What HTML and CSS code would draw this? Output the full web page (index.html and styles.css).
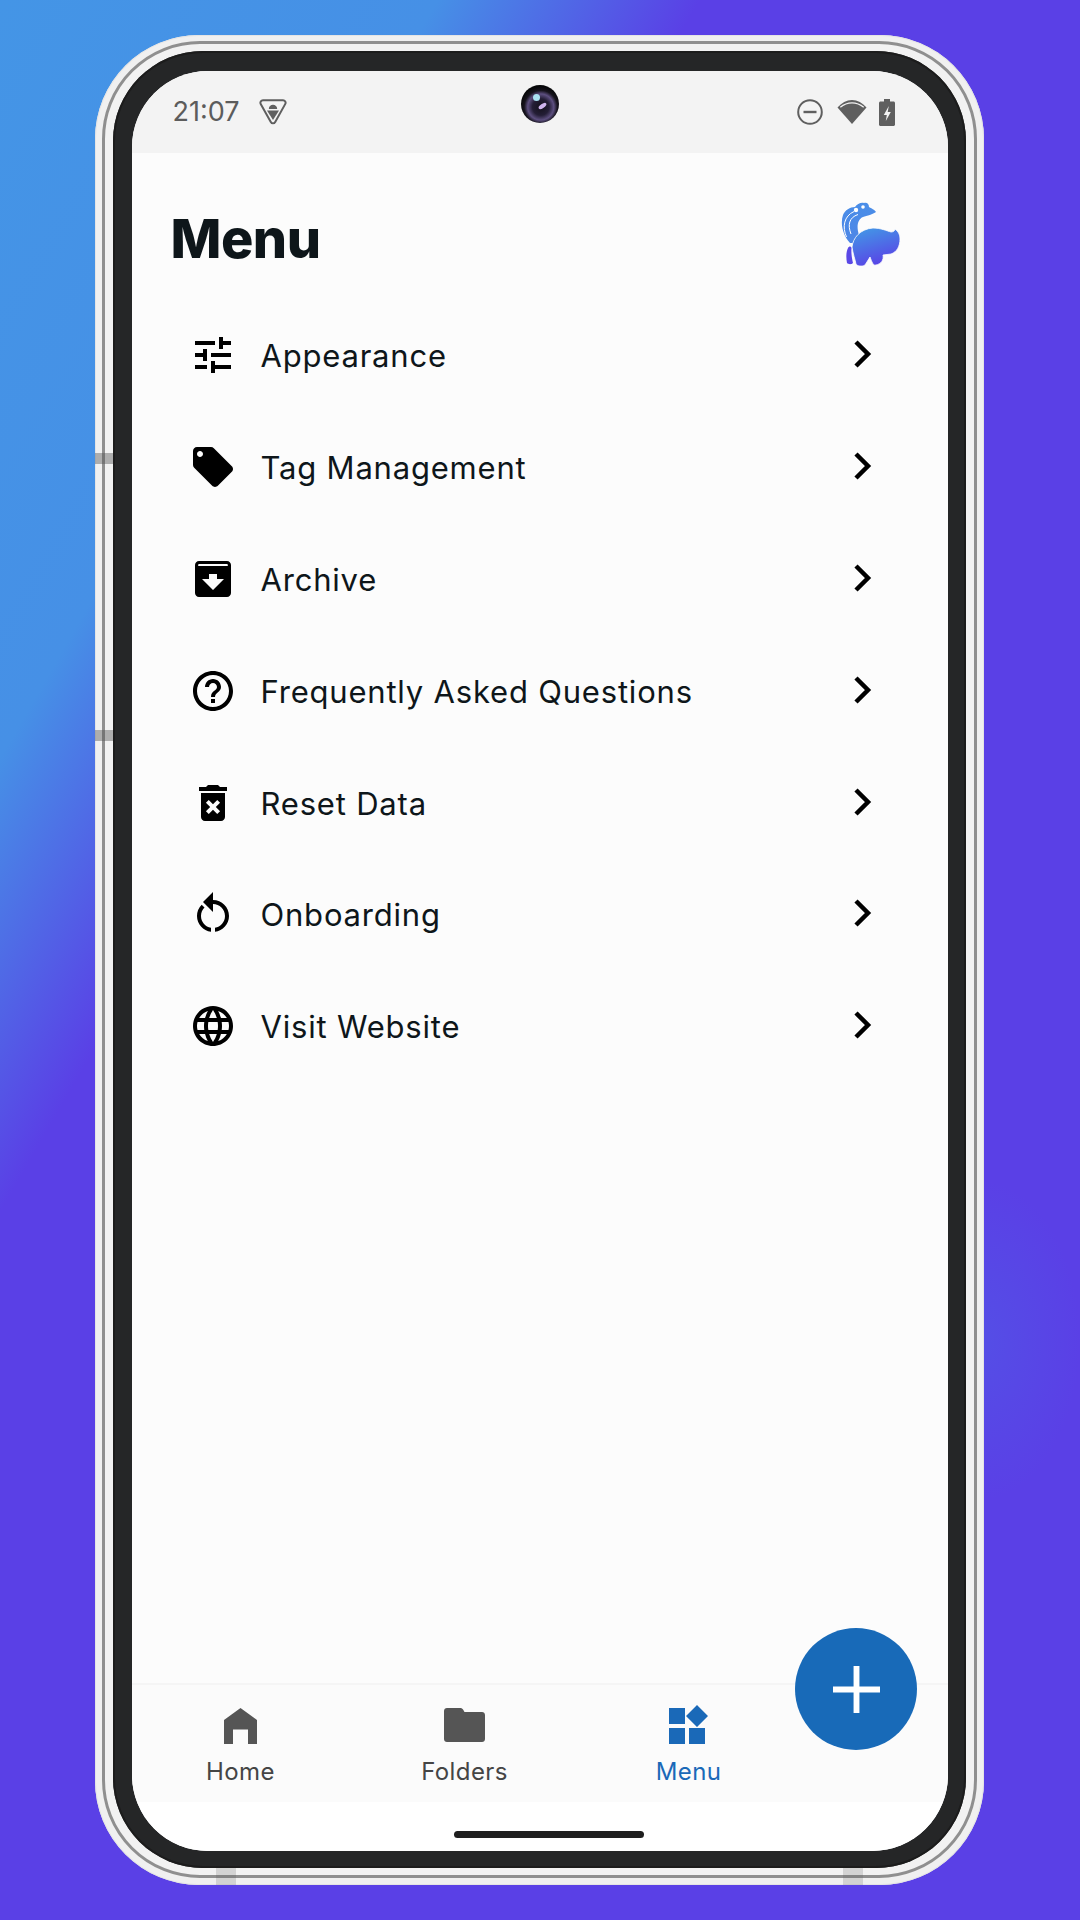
FILE: index.html
```html
<!DOCTYPE html>
<html lang="en">
<head>
<meta charset="utf-8">
<title>Menu</title>
<link rel="stylesheet" href="styles.css">
</head>
<body>
<div class="stage">
  <div class="glow"></div>
  <div class="shell">
    <i class="notch n-left n-a"></i><i class="notch n-left n-b"></i>
    <i class="notch n-bottom n-c"></i><i class="notch n-bottom n-d"></i>
    <div class="band">
      <div class="bezel">
        <div class="screen">
          <header class="status">
            <div class="status-left">
              <span class="time">21:07</span>
              <svg class="ic-vpn" viewBox="0 0 28 26"><path d="M4 1.200h20c2 0 3.200 2 2.300 3.700L16.200 23c-1 1.800-3.400 1.800-4.400 0L1.700 4.900C.8 3.200 2 1.200 4 1.200z" fill="none" stroke="#5f5f5f" stroke-width="2"/><path d="M8 11.500h12l-6 9.500z" fill="#5f5f5f"/><path d="M9.800 10a4.200 4.200 0 0 1 8.400 0z" fill="#5f5f5f"/></svg>
            </div>
            <div class="camera"><i class="glint g1"></i><i class="glint g2"></i></div>
            <div class="status-right">
              <svg class="ic-dnd" viewBox="0 0 26 26"><circle cx="13" cy="13" r="11.800" fill="none" stroke="#5f5f5f" stroke-width="2"/><rect x="6.500" y="11.800" width="13" height="2.400" fill="#5f5f5f"/></svg>
              <svg class="ic-wifi" viewBox="0 0 30 26"><path d="M15 25L.5 8.500C4.500 4 9.500 1 15 1s10.500 3 14.500 7.500z" fill="#5f5f5f"/><path d="M3.300 8.300C6.800 5.300 10.700 3.800 15 3.800s8.200 1.500 11.700 4.500" fill="none" stroke="#f3f3f3" stroke-width="1.200"/></svg>
              <svg class="ic-batt" viewBox="0 0 16 27"><path d="M5 0h6v2.500h3.500c.8 0 1.500.7 1.500 1.500v21.500c0 .8-.7 1.500-1.500 1.500h-13C.7 27 0 26.300 0 25.500V4c0-.8.7-1.500 1.500-1.500H5z" fill="#5f5f5f"/><path d="M9.800 7L4.800 16h3l-1 6 5-9H8.700z" fill="#f3f3f3"/></svg>
            </div>
          </header>
          <main class="content">
            <div class="title-row">
              <h1 class="title">Menu</h1>
              <svg class="logo" viewBox="0 0 60 64">
                <defs>
                  <linearGradient id="lb" x1="0.300" y1="0.050" x2="0.650" y2="1"><stop offset="0" stop-color="#4491e6"/><stop offset="1" stop-color="#5a3fe6"/></linearGradient>
                  <linearGradient id="ln" x1="0.500" y1="0" x2="0.500" y2="1"><stop offset="0" stop-color="#4a8ee8"/><stop offset="1" stop-color="#4d86e6"/></linearGradient>
                </defs>
                <path d="M9 41C2 33-1 22 2 13 4 8 9 5 14 5c2-3 6-5 9-4 3-1 5 1 5 4 2 1 6 3 7 5-3 2-9 4-13 5-5 2-7 9-4 18 1 2-4 5-6 8z" fill="url(#ln)"/>
                <path d="M5.500 35C1 25 3 14 13 9.500M10 32C6.500 23 8 15.500 17 12.500" fill="none" stroke="#fff" stroke-width="1"/>
                <circle cx="15" cy="8" r="2.200" fill="#fff"/><circle cx="22" cy="5" r="1.800" fill="#fff"/>
                <path d="M11 45C12 36 19 27 32 26c8 0 14 3 18 4 2 0 4-1 4-3 2 2 5 4 5 10 0 7-3 13-9 15l-8 1c1 5-2 9-7 10-3 1-4-3-6-8l-5 8c-3 2-8 1-9-1-1-5-3-10-4-17z" fill="url(#lb)" stroke="#fcfcfc" stroke-width=".8"/>
                <path d="M7 46c1-2 3-2 3.500 0-.5 5 .5 11 1.500 15-2 2-5 1-6 0-1-5-1-11 1-15z" fill="#5a48e6"/>
              </svg>
            </div>
            <nav class="menu">
              <a class="row"><span class="row-icon"><svg viewBox="0 0 24 24"><path d="M3 17v2h6v-2H3zM3 5v2h10V5H3zm10 16v-2h8v-2h-8v-2h-2v6h2zM7 9v2H3v2h4v2h2V9H7zm14 4v-2H11v2h10zm-6-4h2V7h4V5h-4V3h-2v6z"/></svg></span><span class="row-label">Appearance</span><svg class="chev" viewBox="0 0 24 24"><path d="M8 4l8 8-8 8"/></svg></a>
              <a class="row"><span class="row-icon"><svg viewBox="0 0 24 24"><path d="M21.410 11.580l-9-9C12.050 2.220 11.550 2 11 2H4c-1.100 0-2 .9-2 2v7c0 .55.220 1.050.590 1.420l9 9c.360.360.860.580 1.410.580.550 0 1.050-.220 1.410-.590l7-7c.370-.360.590-.860.590-1.410 0-.550-.230-1.060-.590-1.420zM5.500 7C4.670 7 4 6.330 4 5.500S4.670 4 5.500 4 7 4.670 7 5.500 6.330 7 5.500 7z"/></svg></span><span class="row-label">Tag Management</span><svg class="chev" viewBox="0 0 24 24"><path d="M8 4l8 8-8 8"/></svg></a>
              <a class="row"><span class="row-icon"><svg viewBox="0 0 24 24"><path d="M5 3h14c1.100 0 2 .9 2 2v14c0 1.100-.9 2-2 2H5c-1.100 0-2-.9-2-2V5c0-1.100.9-2 2-2zm-.4 2.500h14.800V4.900c0-.2-.2-.4-.4-.4H5c-.2 0-.4.200-.4.400zM12 17.500l5.500-5.500H14V9.500h-4V12H6.500z" fill-rule="evenodd"/></svg></span><span class="row-label">Archive</span><svg class="chev" viewBox="0 0 24 24"><path d="M8 4l8 8-8 8"/></svg></a>
              <a class="row"><span class="row-icon"><svg viewBox="0 0 24 24"><path d="M11 18h2v-2h-2v2zm1-16C6.480 2 2 6.480 2 12s4.480 10 10 10 10-4.480 10-10S17.520 2 12 2zm0 18c-4.410 0-8-3.590-8-8s3.590-8 8-8 8 3.590 8 8-3.590 8-8 8zm0-14c-2.210 0-4 1.790-4 4h2c0-1.100.9-2 2-2s2 .9 2 2c0 2-3 1.750-3 5h2c0-2.250 3-2.500 3-5 0-2.210-1.790-4-4-4z"/></svg></span><span class="row-label">Frequently Asked Questions</span><svg class="chev" viewBox="0 0 24 24"><path d="M8 4l8 8-8 8"/></svg></a>
              <a class="row"><span class="row-icon"><svg viewBox="0 0 24 24"><path d="M15.500 4l-1-1h-5l-1 1H5v2h14V4zM6 19c0 1.100.9 2 2 2h8c1.100 0 2-.9 2-2V7H6v12zm2.460-7.120l1.410-1.410L12 12.590l2.120-2.120 1.410 1.410L13.410 14l2.120 2.120-1.410 1.410L12 15.410l-2.120 2.120-1.410-1.410L10.590 14z" fill-rule="evenodd"/></svg></span><span class="row-label">Reset Data</span><svg class="chev" viewBox="0 0 24 24"><path d="M8 4l8 8-8 8"/></svg></a>
              <a class="row"><span class="row-icon"><svg viewBox="0 0 24 24"><path d="M12 5V1L7 6l5 5V7c3.310 0 6 2.690 6 6 0 2.970-2.160 5.430-5 5.910v2.020c3.950-.49 7-3.850 7-7.930 0-4.420-3.580-8-8-8zM6 13c0-1.650.67-3.150 1.760-4.240L6.340 7.340A7.950 7.950 0 0 0 4 13c0 4.080 3.050 7.440 7 7.930v-2.020C8.160 18.430 6 15.970 6 13z"/></svg></span><span class="row-label">Onboarding</span><svg class="chev" viewBox="0 0 24 24"><path d="M8 4l8 8-8 8"/></svg></a>
              <a class="row"><span class="row-icon"><svg viewBox="0 0 24 24"><path d="M11.990 2C6.470 2 2 6.480 2 12s4.470 10 9.990 10C17.520 22 22 17.520 22 12S17.520 2 11.990 2zm6.930 6h-2.950a15.650 15.650 0 0 0-1.380-3.560A8.030 8.030 0 0 1 18.920 8zM12 4.040c.83 1.200 1.480 2.530 1.910 3.960h-3.820c.43-1.430 1.080-2.760 1.910-3.960zM4.260 14C4.100 13.360 4 12.690 4 12s.1-1.360.26-2h3.380c-.08.660-.14 1.320-.14 2s.06 1.340.14 2H4.260zm.82 2h2.950c.32 1.250.78 2.450 1.380 3.560A7.987 7.987 0 0 1 5.080 16zm2.950-8H5.080a7.987 7.987 0 0 1 4.330-3.560A15.650 15.650 0 0 0 8.030 8zM12 19.960c-.83-1.200-1.480-2.530-1.910-3.960h3.820c-.43 1.430-1.080 2.760-1.910 3.960zM14.340 14H9.660c-.09-.66-.16-1.320-.16-2s.07-1.350.16-2h4.680c.09.650.16 1.320.16 2s-.07 1.340-.16 2zm.25 5.560c.6-1.110 1.060-2.310 1.380-3.560h2.950a8.030 8.030 0 0 1-4.330 3.560zM16.360 14c.08-.66.14-1.320.14-2s-.06-1.340-.14-2h3.380c.16.640.26 1.310.26 2s-.1 1.360-.26 2h-3.380z"/></svg></span><span class="row-label">Visit Website</span><svg class="chev" viewBox="0 0 24 24"><path d="M8 4l8 8-8 8"/></svg></a>
            </nav>
          </main>
          <footer class="tabs">
            <a class="tab"><span class="tab-icon"><svg class="ic-home" viewBox="0 0 33 36"><path d="M16.500 0L0 12v24h9V21.500h15V36h9V12z" fill="#555"/></svg></span><span>Home</span></a>
            <a class="tab"><span class="tab-icon"><svg class="ic-folder" viewBox="0 0 41 34"><path d="M3 0h13c1.500 0 2.500.6 3.200 1.800L20.500 4H38c1.700 0 3 1.300 3 3v24c0 1.700-1.300 3-3 3H3c-1.700 0-3-1.300-3-3V3C0 1.300 1.300 0 3 0z" fill="#555"/></svg></span><span>Folders</span></a>
            <a class="tab tab-active"><span class="tab-icon"><svg class="ic-grid" viewBox="0 0 39 39"><path d="M0 3h16v16H0zM0 23h16v16H0zM20 23h16v16H20zM28 0L39 11 28 22 17 11z" fill="#1a69b8"/></svg></span><span>Menu</span></a>
          </footer>
          <div class="gesture"><i class="gesture-bar"></i></div>
          <button class="fab" aria-label="Add"><svg viewBox="0 0 48 48"><path d="M21 0h6v21h21v6H27v21h-6V27H0v-6h21z" fill="#fff"/></svg></button>
        </div>
      </div>
    </div>
  </div>
</div>
</body>
</html>
```
FILE: styles.css
```css
* { box-sizing: border-box; }
html, body { margin: 0; padding: 0; }
body { width: 1080px; height: 1920px; overflow: hidden; font-family: "Inter", "Noto Sans", sans-serif; }

.stage {
  position: relative;
  width: 1080px;
  height: 1920px;
  padding: 35px 96px 35px 95px;
  background: linear-gradient(120deg, #4495e6 0%, #4690e6 20%, #5a40e6 32%, #5a40e6 100%);
}
.glow {
  position: absolute;
  left: 880px; top: 1180px;
  width: 200px; height: 320px;
  background: radial-gradient(closest-side, rgba(80, 90, 230, .55), rgba(90, 64, 230, 0));
}

.shell {
  position: relative;
  width: 889px;
  height: 1850px;
  padding: 6px 7px 7px;
  border-radius: 104px;
  background: #f0f0f0;
  box-shadow: inset 0 0 0 1px #e4e4e4;
}
.band {
  height: 100%;
  border: 3px solid #8f8f8f;
  border-radius: 98px;
  padding: 7px 8px;
  background: #f2f2f2;
}
.bezel {
  height: 100%;
  padding: 20px 18px 17px 18.500px;
  border-radius: 90px;
  background: #252627;
  box-shadow: inset 0 0 0 2px #1c1c1c;
}
.screen {
  position: relative;
  height: 100%;
  display: flex;
  flex-direction: column;
  overflow: hidden;
  border-radius: 76px;
  background: #fff;
}
.notch { position: absolute; background: rgba(80, 80, 80, .42); }
.n-left { left: 0; width: 18px; height: 11px; }
.n-a { top: 418px; }
.n-b { top: 695px; }
.n-bottom { bottom: 0; width: 20px; height: 17px; background: rgba(90, 90, 90, .2); }
.n-c { left: 121px; }
.n-d { right: 121px; }

.status {
  height: 82px;
  flex: none;
  display: flex;
  align-items: center;
  padding: 0 53px 0 41px;
  background: #f3f3f3;
  position: relative;
}
.status-left { display: flex; align-items: center; gap: 19px; flex: 1; }
.time { font-size: 27px; color: #5c5c5c; line-height: 32px; }
.ic-vpn { width: 28px; height: 26px; }
.status-right { display: flex; align-items: center; }
.ic-dnd { width: 26px; height: 26px; margin-right: 14px; }
.ic-wifi { width: 30px; height: 26px; margin-right: 12px; }
.ic-batt { width: 16px; height: 27px; }
.camera {
  position: absolute;
  left: 389px; top: 14px;
  width: 38px; height: 38px;
  border-radius: 50%;
  background: radial-gradient(circle at 52% 58%, #14111c 0, #241e36 28%, #5d4f80 44%, #16131d 56%, #060608 70%);
}
.glint { position: absolute; border-radius: 50%; }
.g1 { left: 12px; top: 9px; width: 7px; height: 7px; background: #a9e2f2; }
.g2 { left: 17px; top: 19px; width: 9px; height: 4px; background: #cfb4ee; transform: rotate(-35deg); }

.content { flex: 1; min-height: 0; background: #fcfcfc; padding: 0 39px; }
.title-row {
  height: 105px;
  margin-top: 33.500px;
  display: flex;
  justify-content: space-between;
  align-items: center;
}
.title { margin: 0; font-size: 54px; font-weight: 800; color: #0e161a; line-height: 1; letter-spacing: -.5px; }
.logo { width: 60px; height: 64px; margin: 0 8px 11px 0; }

.menu { display: flex; flex-direction: column; padding-left: 18px; margin-top: 8px; }
.row {
  display: flex;
  align-items: center;
  height: 111.800px;
  color: #0e161a;
}
.row-icon { width: 48px; height: 48px; flex: none; margin-right: 24px; }
.row-icon svg { display: block; width: 48px; height: 48px; fill: #000; }
.row-label { flex: 1; font-size: 31px; font-weight: 400; letter-spacing: .8px; margin-top: 1px; }
.chev { width: 36px; height: 36px; flex: none; margin: -2px 29px 0 0; fill: none; stroke: #000; stroke-width: 3; }

.tabs {
  flex: none;
  height: 119px;
  display: flex;
  gap: 16px;
  background: #fbfbfb;
  border-top: 2px solid #f5f5f5;
  padding-left: 5px;
}
.tab {
  width: 208px;
  display: flex;
  flex-direction: column;
  align-items: center;
  padding-top: 19px;
  font-size: 24px;
  letter-spacing: .4px;
  line-height: 28px;
  color: #454545;
}
.tab-icon { height: 40px; display: flex; align-items: flex-end; justify-content: center; margin-bottom: 14px; }
.ic-home { width: 33px; height: 36px; }
.ic-folder { width: 41px; height: 34px; margin-bottom: 2px; }
.ic-grid { width: 39px; height: 39px; }
.tab-active { color: #1a69b8; }

.gesture { flex: none; height: 49px; display: flex; justify-content: center; padding: 29px 0 0 18px; background: #fff; }
.gesture-bar { width: 190px; height: 7px; border-radius: 4px; background: #1f1f1f; }

.fab {
  position: absolute;
  right: 31px; bottom: 101px;
  width: 122px; height: 122px;
  border: 0; padding: 0;
  border-radius: 50%;
  background: #186ab8;
  display: flex;
  align-items: center;
  justify-content: center;
}
.fab svg { width: 47px; height: 47px; }
```
